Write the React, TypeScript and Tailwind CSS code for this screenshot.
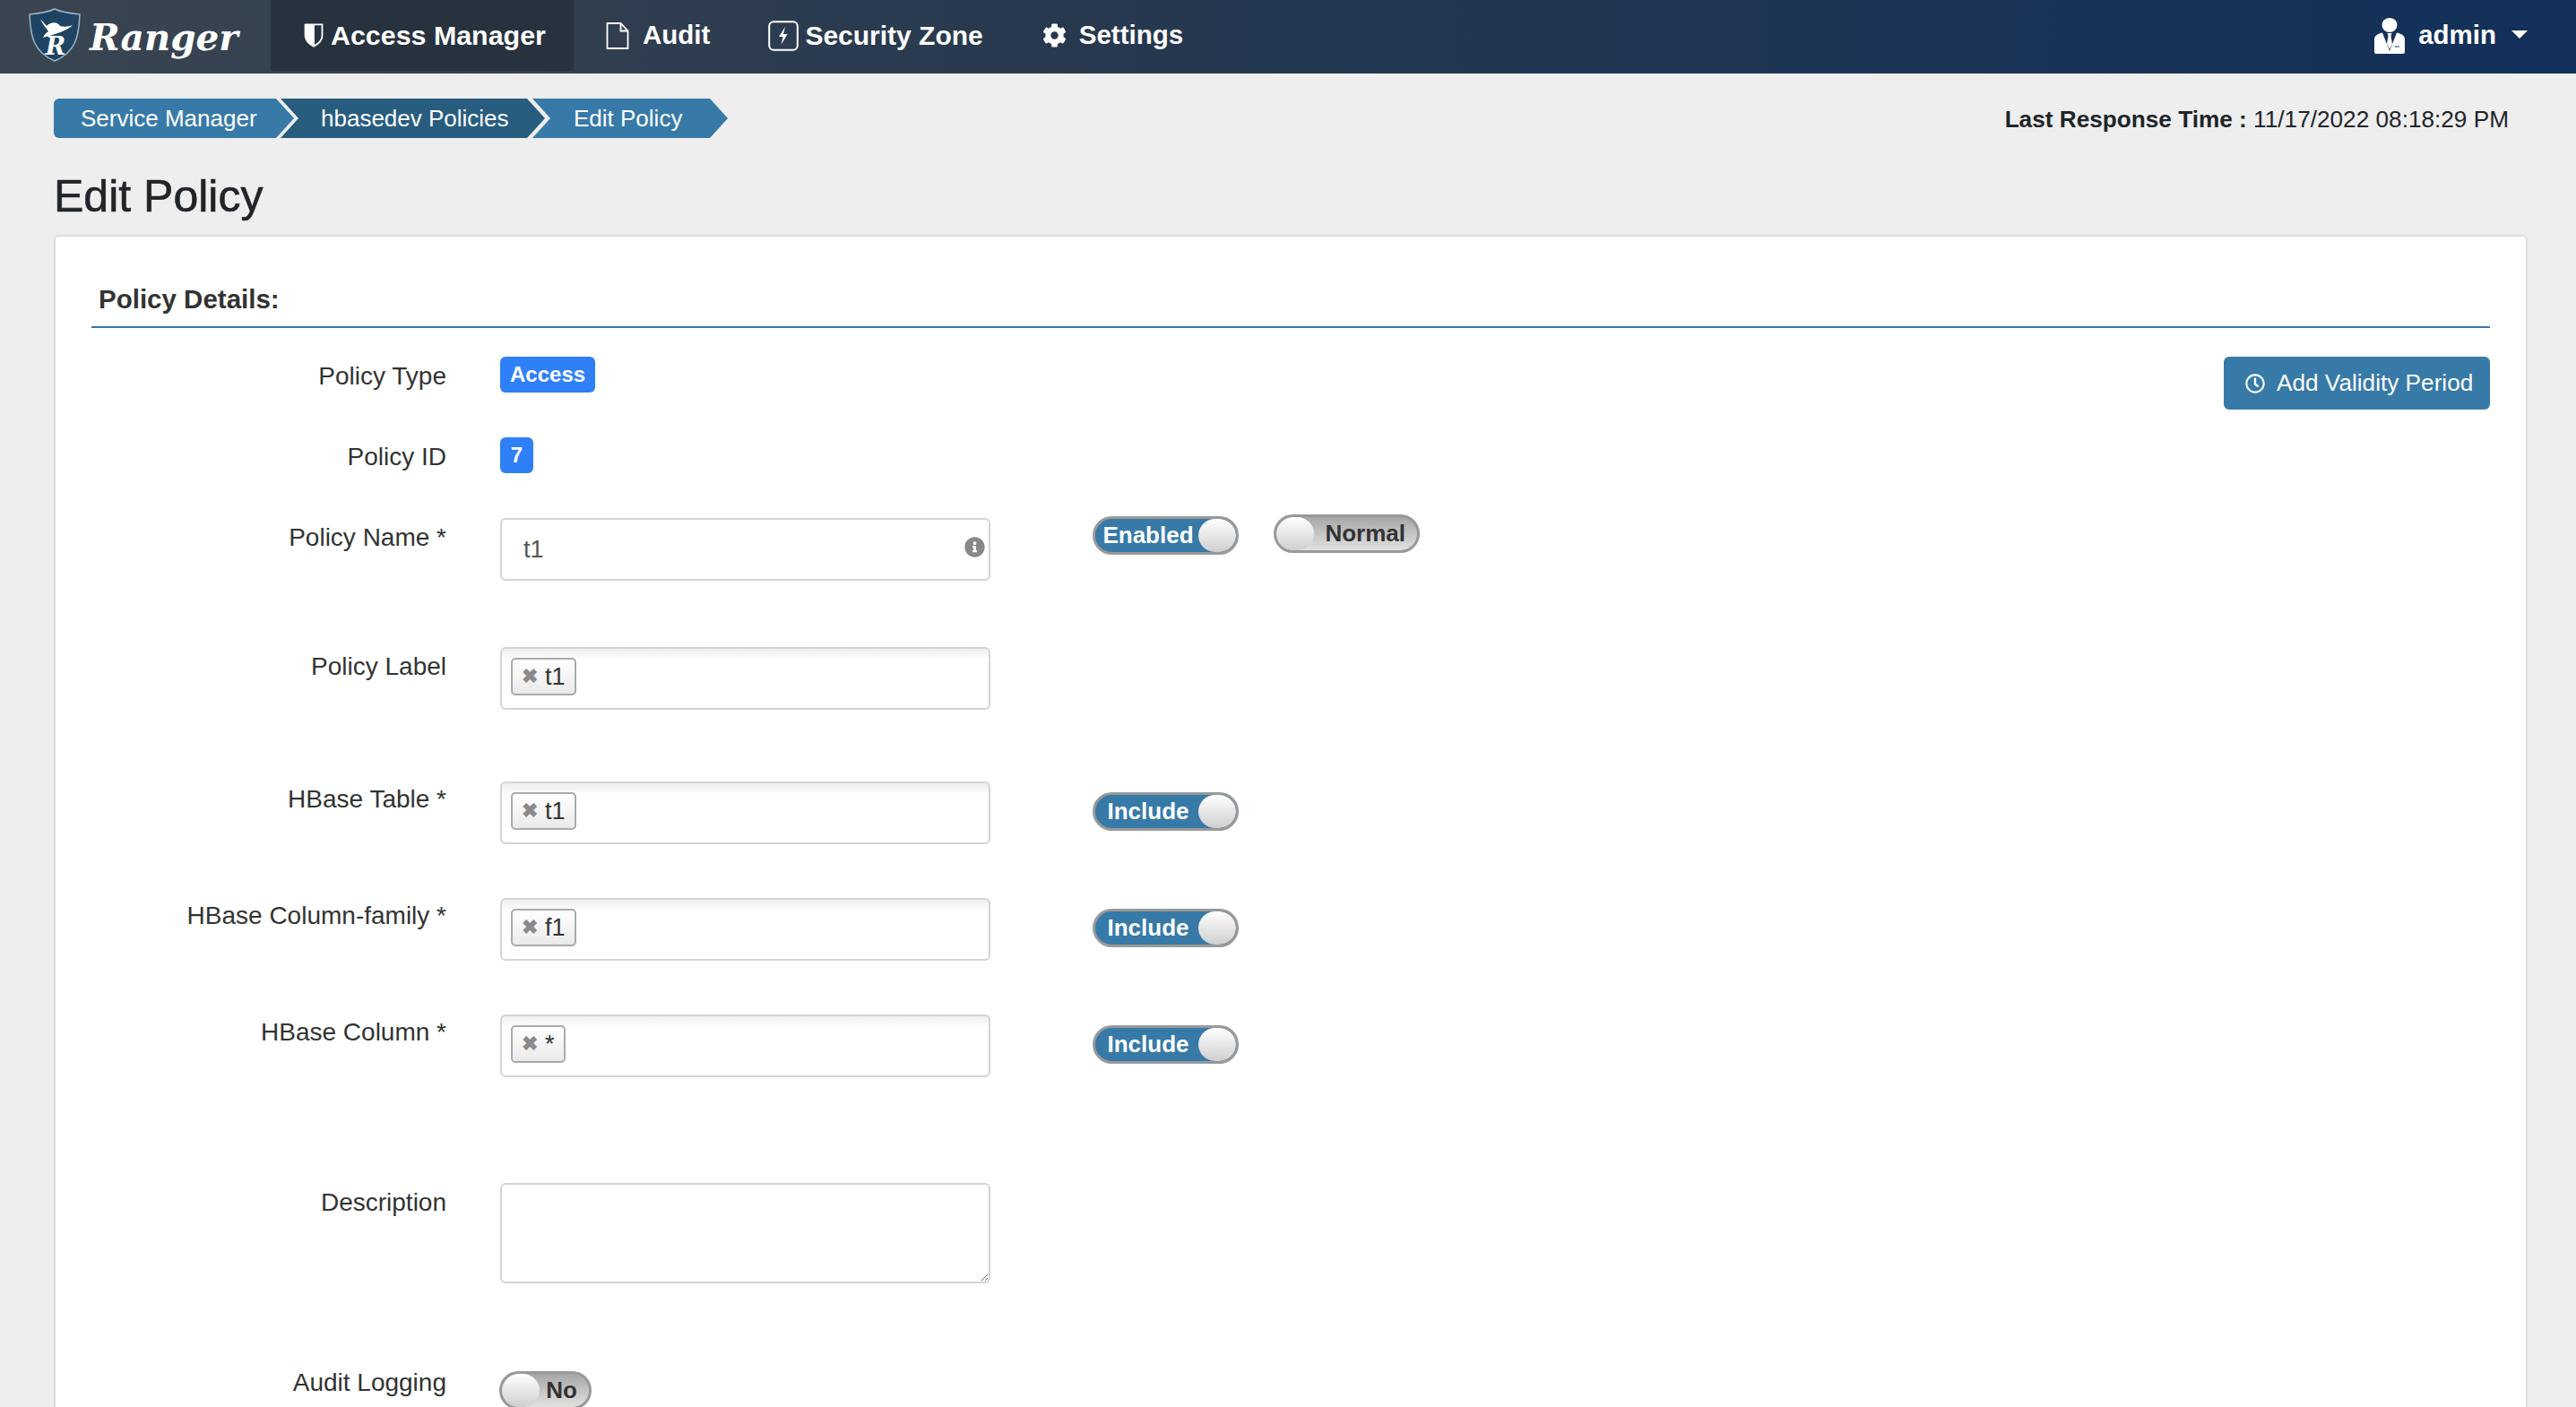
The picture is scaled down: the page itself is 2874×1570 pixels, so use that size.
import React from "react";
import { FaCog, FaInfoCircle, FaRegClock } from "react-icons/fa";

const ShieldIcon = () => (
  <svg viewBox="0 0 24 30" className="w-[22px] h-[27px] mr-[8px]" fill="none">
    <path d="M1.5 1.5h21v14c0 6-5 10-10.5 13C6.500 25.500 1.500 21.500 1.500 15.500z" stroke="#fff" strokeWidth="2" />
    <path d="M1.500 1.500H13v26C7 25 1.500 21.500 1.500 15.500z" fill="#fff" />
  </svg>
);

const FileIcon = () => (
  <svg viewBox="0 0 26 30" className="w-[26px] h-[30px]" fill="none" stroke="#fff" strokeWidth="1.800">
    <path d="M1.500 1h15l8 8.500V29h-23zM16.500 1v8.500h8" />
  </svg>
);

const ZoneIcon = () => (
  <svg viewBox="0 0 34 34" className="w-[34px] h-[34px]" fill="none">
    <rect x="1.200" y="1.200" width="31.600" height="31.600" rx="5" stroke="#fff" strokeWidth="2" />
    <path d="M19 7l-7 11h4.500L14.500 27l7-12H17z" fill="#fff" />
  </svg>
);

const AdminIcon = () => (
  <svg viewBox="0 0 34 40" className="w-[34px] h-[40px]">
    <ellipse cx="17" cy="8" rx="8.500" ry="8" fill="#fff" />
    <path d="M0 24c0-4 3-6 9-7.500l8 20.500 8-20.500c6 1.500 9 3.500 9 7.500v14a2 2 0 0 1-2 2H2a2 2 0 0 1-2-2z" fill="#fff" />
    <path d="M14.500 17h5l-1 3 1.500 9-3 6-3-6 1.500-9z" fill="#fff" />
    <path d="M23 32h5" stroke="#1a3554" strokeWidth="1" />
  </svg>
);

const RangerShield = () => (
  <svg viewBox="0 0 58 60" className="w-[58px] h-[60px]">
    <path d="M29 1c8 4 18 5 28 6-1 24-4 42-28 52C5 49 2 31 1 7c10-1 20-2 28-6z" fill="#1f4463" stroke="#9db4c6" strokeWidth="1.500" />
    <path d="M13 12l7 8c5-5 12-5 15 0 4 1 9 1 14-1-5 6-22 11-33 14 1-3 3-5 6-7-3-4-7-9-9-14z" fill="#fff" />
    <text x="30" y="52" textAnchor="middle" fontFamily="'DejaVu Serif', serif" fontWeight="700" fontStyle="italic" fontSize="27" fill="#fff">R</text>
  </svg>
);

const NavItem = ({ icon, label, className }: { icon: React.ReactNode; label: string; className: string }) => (
  <div className={`flex items-center h-[79px] self-start text-white font-bold ${className}`}>
    {icon}
    <span>{label}</span>
  </div>
);

const Toggle = ({ label, on, className, w = "w-[163px]" }: { label: string; on?: boolean; className?: string; w?: string }) =>
  on ? (
    <div className={`relative flex items-center ${w} h-[43px] rounded-full border-[3px] border-[#999] bg-[#377aa8] text-white font-bold text-[26px] overflow-hidden ${className ?? ""}`}>
      <span className="w-[118px] text-center">{label}</span>
      <span className="absolute right-0 top-0 bottom-0 w-[42px] rounded-full bg-gradient-to-b from-white to-[#cfcfcf]" />
    </div>
  ) : (
    <div className={`relative flex items-center justify-end ${w} h-[43px] rounded-full border-[3px] border-[#999] bg-gradient-to-b from-[#a6a6a6] to-[#e2e2e2] text-[#333] font-bold text-[26px] overflow-hidden pr-[13px] ${className ?? ""}`}>
      <span>{label}</span>
      <span className="absolute left-0 top-0 bottom-0 w-[42px] rounded-full bg-gradient-to-b from-white to-[#cfcfcf]" />
    </div>
  );

const TagField = ({ tag }: { tag: string }) => (
  <div className="w-[547px] h-[70px] rounded-[6px] border-2 border-[#d0d5d9] bg-gradient-to-b from-[#eeeeee] via-white via-[20%] to-white pl-[10px] pt-[10px]">
    <span className="inline-flex items-center gap-[8px] h-[42px] px-[10px] rounded-[5px] border-2 border-[#aaa] bg-gradient-to-b from-white to-[#eaeaea] text-[27px] text-[#333] leading-none">
      <span className="text-[#8a8a8a] font-bold text-[22px]">✖</span>
      {tag}
    </span>
  </div>
);

const Row = ({ label, h, lh = "leading-[44px]", children }: { label: string; h: string; lh?: string; children: React.ReactNode }) => (
  <div className={`flex items-start ${h}`}>
    <label className={`w-[396px] shrink-0 text-right text-[28px] ${lh} text-[#333]`}>{label}</label>
    <div className="ml-[60px] flex items-start flex-1">{children}</div>
  </div>
);

const App = () => {
  return (
    <div className="h-screen overflow-hidden bg-[#eeeeee] font-['Liberation_Sans',Arial,sans-serif] text-[#212529]">
      <header className="h-[82px] flex bg-[linear-gradient(to_right,#3a4551,#28394f_40%,#12305a)] pr-[54px]">
        <div className="flex items-center w-[302px] pl-[32px] pb-[4px]">
          <RangerShield />
          <span className="ml-[10px] mt-[6px] font-['DejaVu_Serif',serif] font-bold italic text-[40.500px] text-white leading-none">Ranger</span>
        </div>
        <NavItem icon={<ShieldIcon />} label="Access Manager" className="w-[338px] bg-[#28323f] pl-[37px] text-[30.400px]" />
        <NavItem icon={<FileIcon />} label="Audit" className="ml-[36px] gap-[15px] text-[29.500px]" />
        <NavItem icon={<ZoneIcon />} label="Security Zone" className="ml-[65px] gap-[7px] text-[30px]" />
        <NavItem icon={<FaCog className="w-[27px] h-[27px]" />} label="Settings" className="ml-[66px] gap-[14px] text-[29.500px]" />
        <div className="ml-auto flex items-center h-[79px] text-white font-bold text-[29.500px]">
          <AdminIcon />
          <span className="ml-[15px]">admin</span>
          <span className="ml-[17px] mt-[-2px] w-0 h-0 border-x-[9px] border-x-transparent border-t-[9px] border-t-white" />
        </div>
      </header>

      <main className="pl-[60px] pr-[54px]">
        <div className="flex justify-between items-start pt-[28px]">
          <nav className="flex h-[44px] text-white text-[26px] leading-[44px]">
            <span className="w-[268px] pl-[30px] rounded-l-[6px] bg-[#377aa8] [clip-path:polygon(0_0,248px_0,100%_50%,248px_100%,0_100%)]">Service Manager</span>
            <span className="w-[295px] -ml-[15px] pl-[45px] bg-[#285d80] [clip-path:polygon(0_0,275px_0,100%_50%,275px_100%,0_100%,20px_50%)]">hbasedev Policies</span>
            <span className="w-[218px] -ml-[14px] pl-[46px] bg-[#377aa8] [clip-path:polygon(0_0,198px_0,100%_50%,198px_100%,0_100%,20px_50%)]">Edit Policy</span>
          </nav>
          <p className="mr-[21px] text-[26.200px] leading-[46px]">
            <b>Last Response Time :</b> 11/17/2022 08:18:29 PM
          </p>
        </div>

        <h1 className="mt-[24px] h-[82px] text-[50px] leading-[78px] text-[#212529] [-webkit-text-stroke:0.6px_#212529]">Edit Policy</h1>

        <section className="h-[1400px] bg-white border-2 border-[#dddddd] rounded-[6px] pt-[50px] px-[40px]">
          <div className="h-[52px] pl-[8px] border-b-2 border-[#377aa8] font-bold text-[29.500px] leading-[40px] text-[#333]">Policy Details:</div>
          <div className="pt-[32px]">
            <Row label="Policy Type" h="h-[90px]">
              <span className="h-[40px] px-[11px] rounded-[6px] bg-[#2f80f7] text-white font-bold text-[24px] leading-[40px]">Access</span>
              <button className="ml-auto h-[59px] w-[297px] flex items-center pl-[24px] gap-[13px] rounded-[6px] bg-[#377aa8] text-white text-[26.200px]">
                <FaRegClock className="w-[22px] h-[22px]" />
                Add Validity Period
              </button>
            </Row>
            <Row label="Policy ID" h="h-[90px]">
              <span className="h-[40px] w-[37px] text-center rounded-[6px] bg-[#2f80f7] text-white font-bold text-[24px] leading-[40px]">7</span>
            </Row>
            <Row label="Policy Name *" h="h-[144px]">
              <div className="relative w-[547px]">
                <input readOnly value="t1" className="w-full h-[70px] rounded-[6px] border-2 border-[#d0d5d9] pl-[24px] text-[27px] text-[#555]" />
                <FaInfoCircle className="absolute right-[6px] top-[21px] w-[23px] h-[23px] text-[#888]" />
              </div>
              <Toggle label="Enabled" on className="ml-[114px] -mt-[2px]" />
              <Toggle label="Normal" className="ml-[39px] -mt-[4px]" />
            </Row>
            <Row label="Policy Label" h="h-[150px]">
              <TagField tag="t1" />
            </Row>
            <Row label="HBase Table *" h="h-[130px]" lh="leading-[40px]">
              <TagField tag="t1" />
              <Toggle label="Include" on className="ml-[114px] mt-[12px]" />
            </Row>
            <Row label="HBase Column-family *" h="h-[130px]" lh="leading-[40px]">
              <TagField tag="f1" />
              <Toggle label="Include" on className="ml-[114px] mt-[12px]" />
            </Row>
            <Row label="HBase Column *" h="h-[188px]" lh="leading-[40px]">
              <TagField tag="*" />
              <Toggle label="Include" on className="ml-[114px] mt-[12px]" />
            </Row>
            <Row label="Description" h="h-[196px]">
              <textarea readOnly className="block w-[547px] h-[112px] rounded-[6px] border-2 border-[#d0d5d9]" />
            </Row>
            <Row label="Audit Logging" h="h-[60px]" lh="leading-[54px]">
              <Toggle label="No" w="w-[103px]" className="-ml-[1px] mt-[14px]" />
            </Row>
          </div>
        </section>
      </main>
    </div>
  );
};

export default App;
